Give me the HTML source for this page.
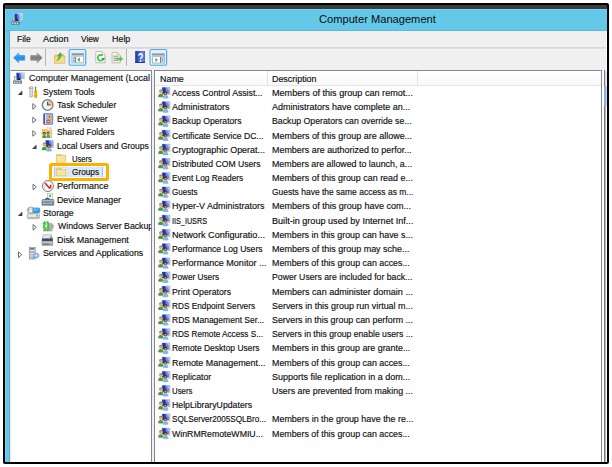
<!DOCTYPE html>
<html>
<head>
<meta charset="utf-8">
<title>Computer Management</title>
<style>
html,body{margin:0;padding:0;background:#fff;}
body{width:612px;height:467px;overflow:hidden;position:relative;font-family:"Liberation Sans",sans-serif;font-size:9px;color:#151515;}
.abs{position:absolute;}
.t{position:absolute;display:inline-block;white-space:nowrap;height:14px;line-height:14px;font-size:9px;transform-origin:0 50%;-webkit-text-stroke:0.15px #111;color:#0c0c0c;}
.tt{height:16px;line-height:16px;color:#111;-webkit-text-stroke:0.05px #111;}
svg{position:absolute;overflow:visible;}
#frame{position:absolute;left:3px;top:3px;width:606px;height:461px;background:#000;border-radius:2px;}
#dark{position:absolute;left:5px;top:5px;width:602px;height:4px;background:#3d3d3d;}
#win{position:absolute;left:5px;top:9px;width:602px;height:453px;background:#64c9e9;}
#menubar{position:absolute;left:10px;top:31px;width:597px;height:16px;background:#f0f0f0;}
#toolbar{position:absolute;left:10px;top:47px;width:597px;height:23px;background:#f0f0f0;border-top:1px solid #d8d8d8;box-sizing:border-box;}
#tbl{position:absolute;left:10px;top:48px;width:597px;height:1px;background:#dedede;}
#client{position:absolute;left:10px;top:70px;width:597px;height:392px;background:#f0f0f0;}
#tree{position:absolute;left:10px;top:70px;width:142px;height:392px;background:#fff;border:1px solid #828790;border-left-color:#efe9e9;border-bottom:none;box-sizing:border-box;}
#treeclip{position:absolute;left:0;top:0;width:151px;height:462px;overflow:hidden;}
#list{position:absolute;left:154px;top:70px;width:448px;height:392px;background:#fff;border:1px solid #828790;border-bottom:none;box-sizing:border-box;}
#hdr{position:absolute;left:155px;top:71px;width:446px;height:15px;background:linear-gradient(#fff,#f8f8f8);border-bottom:1px solid #e6e6e6;box-sizing:border-box;}
.hsep{position:absolute;top:71px;width:1px;height:15px;background:#e2e2e2;}
#act1{position:absolute;left:604px;top:70px;width:1px;height:392px;background:#7d7d7d;}
#act2{position:absolute;left:605px;top:71px;width:1px;height:391px;background:#b4b4b4;}
#act3{position:absolute;left:604px;top:86px;width:2px;height:20px;background:#8fadda;border-right:1px solid #cbd9ee;}
#act4{position:absolute;left:605px;top:71px;width:1px;height:15px;background:#d6d6d6;border-right:1px solid #ebebeb;}
#selbox{position:absolute;left:49px;top:163px;width:59.6px;height:17.7px;border:3.7px solid #f9b200;border-radius:2.5px;box-sizing:border-box;background:#f6f9fd;}
#sel{position:absolute;left:53.5px;top:166.7px;width:49.6px;height:10.6px;background:#dde8f5;border-left:1px solid #b6c9e2;border-right:1px solid #a6bcd9;box-sizing:border-box;}
</style>
</head>
<body>
<div id="frame"></div>
<div id="dark"></div>
<div id="win"></div><div class="abs" style="left:9px;top:31px;width:1px;height:431px;background:#6fa6c0"></div><div class="abs" style="left:5px;top:10px;width:1px;height:452px;background:#6fd5f8"></div><div class="abs" style="left:5px;top:9px;width:602px;height:1px;background:#72d6f8"></div>
<svg style="left:11px;top:13px" width="13" height="13" viewBox="0 0 13 13"><g transform="translate(0.10,0.00) scale(1.0000,1.0000)"><rect x="2.7" y="0" width="9.1" height="7.3" rx="0.4" fill="#cdcec8"/><rect x="3.5" y="0.7" width="7.4" height="5.6" fill="#a6c2f2"/><path d="M3.5 0.7 H5.6 L6.8 6.3 H3.5z" fill="#1a2fc4"/><path d="M5.6 0.7 H7.2 L8.6 6.3 H6.8z" fill="#4f72e2"/><path d="M9 0.7 H10.9 V3 z" fill="#d3e2fa"/><path d="M3.2 8 L4.4 6 H7 L7.8 8Z" fill="#2b2f38"/><rect x="0" y="8.6" width="8.9" height="3.2" fill="#67798b"/><rect x="0" y="8.6" width="8.9" height="0.7" fill="#8b9aa8"/><rect x="0.9" y="9.7" width="1.5" height="1.4" fill="#d3dbe3"/><rect x="3.3" y="9.7" width="1.5" height="1.4" fill="#d3dbe3"/><rect x="5.7" y="9.7" width="1.5" height="1.4" fill="#d3dbe3"/><rect x="0.7" y="3.9" width="1.7" height="2.4" fill="#8fcf86"/><rect x="0.7" y="3.9" width="1.7" height="0.9" fill="#a8aeb4"/><rect x="1.1" y="6.3" width="0.9" height="2.3" fill="#8a9199"/></g></svg>
<div id="menubar"></div>
<div id="toolbar"></div><div id="tbl"></div>
<svg style="left:13px;top:52px" width="14" height="14" viewBox="0 0 14 14"><g transform="translate(0.00,0.20)"><defs><linearGradient id="gb" x1="0" y1="0" x2="0" y2="1"><stop offset="0" stop-color="#6cc3f7"/><stop offset="0.5" stop-color="#1f8fe6"/><stop offset="1" stop-color="#3aa2ee"/></linearGradient></defs><path d="M0.6 5.6 L5.7 0.8 V3.3 H11.7 V8 H5.7 V10.5Z" fill="url(#gb)" stroke="#2e97ea" stroke-width="0.7" stroke-linejoin="round"/></g></svg>
<svg style="left:30px;top:52px" width="14" height="14" viewBox="0 0 14 14"><g transform="translate(0.00,0.20)"><defs><linearGradient id="gg" x1="0" y1="0" x2="0" y2="1"><stop offset="0" stop-color="#a5a5a5"/><stop offset="0.5" stop-color="#7d7d7d"/><stop offset="1" stop-color="#9a9a9a"/></linearGradient></defs><path d="M12.3 5.6 L7.2 0.8 V3.3 H0.7 V8 H7.2 V10.5Z" fill="url(#gg)" stroke="#8c8c8c" stroke-width="0.7" stroke-linejoin="round"/></g></svg>
<div class="abs" style="left:45px;top:49px;width:1px;height:17px;background:#b4b4b4"></div>
<div class="abs" style="left:126px;top:49px;width:1px;height:17px;background:#b4b4b4"></div>
<svg style="left:54px;top:52px" width="13" height="13" viewBox="0 0 13 13"><g transform="translate(0.00,0.00)"><path d="M0.3 2.6 h4.2 l0.8 1 h5.6 v7.6 h-10.6z" fill="#e6c96e"/><rect x="0.3" y="4.2" width="10.6" height="7" fill="#f3dc8c" stroke="#d2b04e" stroke-width="0.5"/><path d="M2.6 8.6 Q4.6 7.4 5.2 3.6 L3.6 3.8 L6.4 0.4 L8.2 3.4 L6.8 3.5 Q6.4 8 2.6 8.6Z" fill="#3db83a" stroke="#2a8f2a" stroke-width="0.3"/><rect x="8.4" y="2.4" width="1.4" height="0.9" fill="#4aa0e0"/></g></svg>
<svg style="left:68px;top:48px" width="20" height="19" viewBox="0 0 20 19"><g transform="translate(0.60,0.90)"><defs><linearGradient id="hg68" x1="0" y1="0" x2="0" y2="1"><stop offset="0" stop-color="#e4f1fd"/><stop offset="1" stop-color="#cfe5f9"/></linearGradient></defs><rect x="0.6" y="0.6" width="16.5" height="15.7" rx="1.2" fill="url(#hg68)" stroke="#4fabea" stroke-width="1.2"/><rect x="1.7" y="1.7" width="14.3" height="13.5" fill="none" stroke="#e6f2fd" stroke-width="0.8"/></g></svg>
<svg style="left:71px;top:53px" width="14" height="12" viewBox="0 0 14 12"><g transform="translate(0.70,0.30)"><rect x="0.3" y="0.3" width="11.6" height="9.2" fill="#fff" stroke="#9da2a8" stroke-width="0.7"/><rect x="0.3" y="0.3" width="11.6" height="1.7" fill="#8b95a5"/><rect x="0.6" y="2" width="11" height="1.4" fill="#b9bdc2"/><rect x="0.8" y="3.6" width="3" height="5.6" fill="#b7d4f1"/><rect x="3.6" y="3.4" width="0.8" height="5.8" fill="#5f6672"/><rect x="1.6" y="4.6" width="1.2" height="1" fill="#5a8fd6"/><rect x="1.6" y="7" width="1.2" height="1" fill="#5a8fd6"/><path d="M8.2 4.3 V8.5 L5.6 6.4Z" fill="#2fae3a"/></g></svg>
<svg style="left:95px;top:51px" width="12" height="14" viewBox="0 0 12 14"><g transform="translate(0.30,0.00)"><path d="M1 0.9 H7 L10.2 4.1 V12.2 H1Z" fill="#d9d9d9"/><path d="M0.5 0.5 H6.6 L9.7 3.6 V11.7 H0.5Z" fill="#fefefe" stroke="#a8a8a8" stroke-width="0.7"/><path d="M6.6 0.5 V3.6 H9.7" fill="#ececec" stroke="#a8a8a8" stroke-width="0.5"/><path d="M7.3 4.6 A2.9 2.9 0 1 0 8.2 7.4" fill="none" stroke="#3fc640" stroke-width="1.7"/><path d="M6.2 6.9 H9.8 L8.1 9.5Z" fill="#27a02c"/></g></svg>
<svg style="left:111px;top:51px" width="14" height="14" viewBox="0 0 14 14"><g transform="translate(0.50,0.80)"><path d="M0.9 0.9 H6.4 L9.2 3.7 V11.5 H0.9Z" fill="#dcdcd4"/><path d="M0.5 0.5 H6 L8.7 3.2 V11 H0.5Z" fill="#f9f5de" stroke="#b3ae98" stroke-width="0.7"/><path d="M6 0.5 V3.2 H8.7" fill="#ebe6c8" stroke="#b3ae98" stroke-width="0.5"/><path d="M1.8 4.4 H6.8 M1.8 6.5 H6.2 M1.8 8.6 H6.8" stroke="#66668e" stroke-width="0.7"/><path d="M5.4 6.2 H8.6 V4.9 L11.7 7.1 L8.6 9.3 V8 H5.4Z" fill="#4ad048" stroke="#35b238" stroke-width="0.3"/></g></svg>
<svg style="left:135px;top:51px" width="11" height="13" viewBox="0 0 11 13"><g transform="translate(0.20,0.00)"><defs><linearGradient id="hb" x1="0" y1="0" x2="1" y2="0"><stop offset="0" stop-color="#24309a"/><stop offset="0.3" stop-color="#3453c8"/><stop offset="0.75" stop-color="#5f86e8"/><stop offset="1" stop-color="#4467d4"/></linearGradient></defs><rect x="0" y="0" width="9.8" height="12" fill="url(#hb)"/><rect x="0" y="11" width="9.8" height="1" fill="#26338f"/><text transform="translate(5.4,10.7) scale(0.74,1)" x="0" y="0" text-anchor="middle" font-family="Liberation Sans, sans-serif" font-weight="bold" font-size="12.2" fill="#ffffff">?</text></g></svg>
<svg style="left:149px;top:48px" width="20" height="19" viewBox="0 0 20 19"><g transform="translate(0.50,0.90)"><defs><linearGradient id="hg149" x1="0" y1="0" x2="0" y2="1"><stop offset="0" stop-color="#e4f1fd"/><stop offset="1" stop-color="#cfe5f9"/></linearGradient></defs><rect x="0.6" y="0.6" width="16.5" height="15.7" rx="1.2" fill="url(#hg149)" stroke="#4fabea" stroke-width="1.2"/><rect x="1.7" y="1.7" width="14.3" height="13.5" fill="none" stroke="#e6f2fd" stroke-width="0.8"/></g></svg>
<svg style="left:152px;top:53px" width="14" height="12" viewBox="0 0 14 12"><g transform="translate(0.30,0.50)"><rect x="0.3" y="0.3" width="11.8" height="9.2" fill="#fff" stroke="#9da2a8" stroke-width="0.7"/><rect x="0.3" y="0.3" width="11.8" height="1.7" fill="#8b95a5"/><rect x="0.6" y="2" width="11.2" height="1.4" fill="#b9bdc2"/><rect x="8.4" y="3.6" width="3.4" height="5.6" fill="#b7d4f1"/><rect x="7.9" y="3.4" width="0.8" height="5.8" fill="#5f6672"/><rect x="9.7" y="4.6" width="0.9" height="0.9" fill="#4a7fc0"/><rect x="9.7" y="6.6" width="0.9" height="0.9" fill="#4a7fc0"/><path d="M3.2 4.3 V8.5 L5.6 6.4Z" fill="#2fae3a"/></g></svg>
<div id="client"></div>
<div id="tree"></div>
<div id="selbox"></div><div id="sel"></div>
<div id="treeclip">
<svg style="left:13px;top:72px" width="13" height="13" viewBox="0 0 13 13"><g transform="translate(0.10,0.30) scale(1.0000,0.9661)"><rect x="2.7" y="0" width="9.1" height="7.3" rx="0.4" fill="#cdcec8"/><rect x="3.5" y="0.7" width="7.4" height="5.6" fill="#a6c2f2"/><path d="M3.5 0.7 H5.6 L6.8 6.3 H3.5z" fill="#1a2fc4"/><path d="M5.6 0.7 H7.2 L8.6 6.3 H6.8z" fill="#4f72e2"/><path d="M9 0.7 H10.9 V3 z" fill="#d3e2fa"/><path d="M3.2 8 L4.4 6 H7 L7.8 8Z" fill="#2b2f38"/><rect x="0" y="8.6" width="8.9" height="3.2" fill="#67798b"/><rect x="0" y="8.6" width="8.9" height="0.7" fill="#8b9aa8"/><rect x="0.9" y="9.7" width="1.5" height="1.4" fill="#d3dbe3"/><rect x="3.3" y="9.7" width="1.5" height="1.4" fill="#d3dbe3"/><rect x="5.7" y="9.7" width="1.5" height="1.4" fill="#d3dbe3"/><rect x="0.7" y="3.9" width="1.7" height="2.4" fill="#8fcf86"/><rect x="0.7" y="3.9" width="1.7" height="0.9" fill="#a8aeb4"/><rect x="1.1" y="6.3" width="0.9" height="2.3" fill="#8a9199"/></g></svg>
<span class="t" style="left:29.30px;top:71.1px;transform:scaleX(0.9946)">Computer Management (Local</span>
<svg style="left:29px;top:86px" width="10" height="14" viewBox="0 0 10 14"><g transform="translate(0.20,0.00) scale(0.9651,1.0000)"><path d="M1.1 0.5 V2.6 H2.9 V0.5 Q4.4 1.2 3.9 3.2 L3.2 4.2 V10.6 Q2 11.8 0.8 10.6 V4.2 L0.1 3.2 Q-0.4 1.2 1.1 0.5Z" fill="#ececec" stroke="#77797c" stroke-width="0.6"/><rect x="6.2" y="0.4" width="1" height="5" fill="#5a5d61"/><path d="M5.2 5 Q6.7 4 8.2 5 Q8.6 6.6 7.6 7.6 Q8.8 9.6 8 11.4 Q6.7 12.2 5.4 11.4 Q4.6 9.6 5.8 7.6 Q4.8 6.6 5.2 5Z" fill="#f3ab05" stroke="#c98a00" stroke-width="0.3"/></g></svg>
<svg style="left:17px;top:90px" width="6" height="6" viewBox="0 0 6 6"><path transform="translate(0.80,0.60)" d="M4.5 0 V4.5 H0Z" fill="#3c3c3c"/></svg>
<span class="t" style="left:43.00px;top:85.0px;transform:scaleX(0.9682)">System Tools</span>
<svg style="left:41px;top:99px" width="14" height="13" viewBox="0 0 14 13"><g transform="translate(0.70,0.20) scale(1.0000,1.0000)"><circle cx="5.9" cy="5.85" r="5.3" fill="#dfe6ee" stroke="#7b8189" stroke-width="1.4"/><circle cx="5.9" cy="5.85" r="4.2" fill="#f4f7fa"/><path d="M5.9 5.85 V1.6 A4.25 4.25 0 0 1 10.15 5.85Z" fill="#f2c266"/><path d="M5.9 2.6V5.85H9" fill="none" stroke="#464a51" stroke-width="1.1"/></g></svg>
<svg style="left:31px;top:102px" width="7" height="9" viewBox="0 0 7 9"><path transform="translate(0.90,0.80)" d="M0.9 0.8 L4.2 3.6 L0.9 6.4Z" fill="#fff" stroke="#5f5f5f" stroke-width="0.9"/></svg>
<span class="t" style="left:57.30px;top:98.2px;transform:scaleX(0.9637)">Task Scheduler</span>
<svg style="left:43px;top:113px" width="12" height="13" viewBox="0 0 12 13"><g transform="translate(0.30,0.30) scale(1.0000,1.0000)"><rect x="0.4" y="0.4" width="9" height="10.6" rx="0.6" fill="#a9b9e2" stroke="#5168b4" stroke-width="0.8"/><rect x="0.4" y="0.4" width="1.2" height="10.6" fill="#3f4f8e"/><rect x="1.8" y="0.8" width="0.9" height="9.8" fill="#dfe6f6"/><path d="M6.2 1.4 L8.6 5.8 H3.8Z" fill="#f4d233" stroke="#b99a1c" stroke-width="0.3"/><rect x="5.9" y="2.8" width="0.7" height="1.8" fill="#3a3210"/><circle cx="5" cy="8" r="1.9" fill="#dc3a3a"/><rect x="3.9" y="7.6" width="2.2" height="0.9" fill="#fff"/></g></svg>
<svg style="left:31px;top:116px" width="7" height="9" viewBox="0 0 7 9"><path transform="translate(0.90,0.40)" d="M0.9 0.8 L4.2 3.6 L0.9 6.4Z" fill="#fff" stroke="#5f5f5f" stroke-width="0.9"/></svg>
<span class="t" style="left:56.90px;top:111.8px;transform:scaleX(0.9572)">Event Viewer</span>
<svg style="left:41px;top:127px" width="12" height="13" viewBox="0 0 12 13"><g transform="translate(0.70,0.50) scale(1.0000,1.0000)"><path d="M0.3 1.6 H4.6 L5.4 2.6 H9.9 V10.3 H0.3Z" fill="#e6c86c"/><rect x="5.6" y="0.2" width="3.8" height="2.6" fill="#f6f2dc" stroke="#c9b470" stroke-width="0.3"/><rect x="7.6" y="0.8" width="1.2" height="0.8" fill="#5b9fdc"/><rect x="0.3" y="2.8" width="9.6" height="7.5" fill="#f5dc88" stroke="#d3b04e" stroke-width="0.5"/><path d="M0.8 10.4 Q0.8 7.6 2.6 7.6 Q4.4 7.6 4.4 10.4Z" fill="#3f9440"/><circle cx="2.6" cy="5.8" r="1.5" fill="#4a3520"/><circle cx="2.6" cy="6.3" r="0.9" fill="#c9996a"/><path d="M4.8 10.2 Q4.8 7.2 6.6 7.2 Q8.4 7.2 8.4 10.2Z" fill="#3f94b8"/><circle cx="6.4" cy="5.4" r="1.5" fill="#4a3520"/><circle cx="6.4" cy="5.9" r="0.9" fill="#c9996a"/></g></svg>
<svg style="left:31px;top:129px" width="7" height="9" viewBox="0 0 7 9"><path transform="translate(0.90,0.80)" d="M0.9 0.8 L4.2 3.6 L0.9 6.4Z" fill="#fff" stroke="#5f5f5f" stroke-width="0.9"/></svg>
<span class="t" style="left:56.90px;top:124.7px;transform:scaleX(0.9350)">Shared Folders</span>
<svg style="left:41px;top:140px" width="14" height="13" viewBox="0 0 14 13"><g transform="translate(0.70,0.10) scale(0.9919,1.0000)"><rect x="3.6" y="0" width="8.7" height="7.9" rx="0.5" fill="#c6c7c1"/><rect x="4.2" y="0.5" width="6.8" height="5.9" fill="#6a8aec"/><path d="M4.2 0.5 H7.2 L8 6.4 H4.2z" fill="#1b31c8"/><path d="M8.6 0.5 H11 V4 z" fill="#a9c1f6"/><path d="M0 9.6 Q0.2 6.6 2.6 6.6 Q5 6.6 5.2 9.6 Q2.6 10.6 0 9.6Z" fill="#4a9a3c"/><circle cx="2.8" cy="4.4" r="1.9" fill="#cdb96e"/><path d="M0.9 4.2 A1.9 1.9 0 0 1 4.7 4.2 L3.8 3.6 L1.8 3.6Z" fill="#9c8440"/><path d="M4.4 10.9 Q4.6 7.8 7.4 7.8 Q10.2 7.8 10.4 10.9 Q7.4 11.9 4.4 10.9Z" fill="#86b6e6"/><circle cx="7.3" cy="5.8" r="2" fill="#5c3416"/><circle cx="7.4" cy="6.5" r="1.1" fill="#c8915f"/></g></svg>
<svg style="left:32px;top:144px" width="6" height="6" viewBox="0 0 6 6"><path transform="translate(0.00,0.40)" d="M4.5 0 V4.5 H0Z" fill="#3c3c3c"/></svg>
<span class="t" style="left:57.10px;top:138.8px;transform:scaleX(0.9462)">Local Users and Groups</span>
<svg style="left:55px;top:153px" width="13" height="11" viewBox="0 0 13 11"><g transform="translate(0.90,0.90) scale(1.0000,1.0000)"><path d="M0.3 0.6 Q0.3 0.2 0.8 0.2 H5.4 L6.2 1.4 H9.9 V8.3 H0.3Z" fill="#e6cc78"/><rect x="6.6" y="0.2" width="2.8" height="1.6" fill="#fbfaf2" stroke="#d9d3b5" stroke-width="0.3"/><rect x="0.3" y="1.8" width="9.6" height="6.5" fill="#f7e6a0" stroke="#d6bc66" stroke-width="0.55"/></g></svg>
<span class="t" style="left:72.20px;top:151.6px;transform:scaleX(0.8416)">Users</span>
<svg style="left:55px;top:167px" width="13" height="11" viewBox="0 0 13 11"><g transform="translate(0.90,0.60) scale(1.0000,1.0000)"><path d="M0.3 0.6 Q0.3 0.2 0.8 0.2 H5.4 L6.2 1.4 H9.9 V8.3 H0.3Z" fill="#e6cc78"/><rect x="6.6" y="0.2" width="2.8" height="1.6" fill="#fbfaf2" stroke="#d9d3b5" stroke-width="0.3"/><rect x="0.3" y="1.8" width="9.6" height="6.5" fill="#f7e6a0" stroke="#d6bc66" stroke-width="0.55"/></g></svg>
<span class="t" style="left:72.20px;top:165.1px;transform:scaleX(0.9162)">Groups</span>
<svg style="left:41px;top:180px" width="14" height="14" viewBox="0 0 14 14"><g transform="translate(0.80,0.00) scale(1.0000,1.0000)"><circle cx="6.1" cy="6.05" r="5.5" fill="#fbfbfb" stroke="#7f8388" stroke-width="1"/><circle cx="6.1" cy="6.05" r="4.4" fill="none" stroke="#d9dcdf" stroke-width="0.6"/><path d="M3.2 3 L7.6 8 L8.8 7.8 V4.8" fill="none" stroke="#d81e1e" stroke-width="1.5" stroke-linejoin="round"/><path d="M2.8 8.4 L3.6 4.4" fill="none" stroke="#7fae86" stroke-width="0.5"/></g></svg>
<svg style="left:32px;top:183px" width="7" height="9" viewBox="0 0 7 9"><path transform="translate(0.20,0.40)" d="M0.9 0.8 L4.2 3.6 L0.9 6.4Z" fill="#fff" stroke="#5f5f5f" stroke-width="0.9"/></svg>
<span class="t" style="left:56.80px;top:178.8px;transform:scaleX(0.9977)">Performance</span>
<svg style="left:41px;top:193px" width="14" height="14" viewBox="0 0 14 14"><g transform="translate(0.80,0.30) scale(1.0000,1.0000)"><rect x="5.6" y="0.2" width="5.4" height="7" fill="#f3f5f6" stroke="#9aa0a6" stroke-width="0.5"/><rect x="7.2" y="1.6" width="2" height="2" fill="#4cb848"/><path d="M3 6.6 Q5.6 3.8 8.4 6.6" fill="none" stroke="#3d4a55" stroke-width="1.3"/><rect x="0.2" y="6.2" width="11.8" height="5.8" rx="0.6" fill="#71879a" stroke="#4d6070" stroke-width="0.5"/><rect x="0.6" y="6.6" width="11" height="1.4" fill="#a9bac8"/><rect x="1.6" y="9.2" width="1.2" height="1.6" fill="#d8e0e8"/><rect x="8.6" y="9.2" width="1.2" height="1.6" fill="#d8e0e8"/><rect x="3.4" y="9.8" width="4.6" height="0.7" fill="#c2ced8"/></g></svg>
<span class="t" style="left:56.80px;top:192.7px;transform:scaleX(0.9766)">Device Manager</span>
<svg style="left:26px;top:206px" width="15" height="14" viewBox="0 0 15 14"><g transform="translate(0.90,0.70) scale(1.0000,1.0000)"><ellipse cx="4" cy="3.6" rx="3.6" ry="3.4" fill="#c9cdd1" stroke="#8e9499" stroke-width="0.6"/><ellipse cx="3.8" cy="3.6" rx="1.6" ry="2" fill="#eef0f2"/><rect x="1.2" y="2.4" width="1.2" height="1.2" fill="#4cb848"/><rect x="6" y="1.2" width="6.8" height="5" rx="0.8" fill="#3ea2e0" stroke="#2c78b8" stroke-width="0.5"/><path d="M6.6 1.8 H12.2 L6.6 4.8Z" fill="#6cbcec"/><rect x="0.4" y="7" width="12.2" height="5" rx="1.2" fill="#e6e8ea" stroke="#8e9499" stroke-width="0.7"/><rect x="0.8" y="10.2" width="11.4" height="1.4" rx="0.6" fill="#b4b9be"/><rect x="9.4" y="8.2" width="1.6" height="1.6" fill="#4cb848"/></g></svg>
<svg style="left:17px;top:211px" width="6" height="6" viewBox="0 0 6 6"><path transform="translate(0.80,0.40)" d="M4.5 0 V4.5 H0Z" fill="#3c3c3c"/></svg>
<span class="t" style="left:43.00px;top:205.8px;transform:scaleX(0.9741)">Storage</span>
<svg style="left:41px;top:220px" width="14" height="13" viewBox="0 0 14 13"><g transform="translate(0.80,0.50) scale(1.0000,1.0000)"><ellipse cx="8.8" cy="6" rx="2.8" ry="3.2" fill="#b9bdc2" stroke="#7f858b" stroke-width="0.5"/><circle cx="9.8" cy="5.8" r="0.8" fill="#d07a3a"/><path d="M1.2 9.4 H10.6 V10.8 H1.2Z" fill="#9ba0a6"/><path d="M2.6 9.8 Q0.4 6.6 2 3.8 L0.6 3.6 L3 0.4 L4.6 4 L3.4 3.8 Q2.6 6.4 4.6 9.6Z" fill="#3fd23a" stroke="#2aa02a" stroke-width="0.3"/><path d="M6.2 0.8 Q8.4 4 6.8 7 L8.2 7.2 L6 10.6 L4.2 7 L5.4 7.2 Q6.4 4.4 4.6 1.2Z" fill="#3fd23a" stroke="#2aa02a" stroke-width="0.3"/></g></svg>
<svg style="left:32px;top:223px" width="7" height="9" viewBox="0 0 7 9"><path transform="translate(0.20,0.70)" d="M0.9 0.8 L4.2 3.6 L0.9 6.4Z" fill="#fff" stroke="#5f5f5f" stroke-width="0.9"/></svg>
<span class="t" style="left:57.70px;top:219.1px;transform:scaleX(0.9711)">Windows Server Backup</span>
<svg style="left:41px;top:234px" width="14" height="13" viewBox="0 0 14 13"><g transform="translate(0.50,0.30) scale(1.0000,1.0000)"><path d="M0.6 4.4 L2 0.4 H9.8 L11.2 4.4Z" fill="#e4e7e9" stroke="#8c9197" stroke-width="0.5"/><rect x="8.6" y="2.2" width="1.8" height="1.8" fill="#4cb848"/><rect x="0.4" y="4.2" width="11" height="2.6" fill="#3f454c"/><rect x="2.2" y="5" width="1" height="0.9" fill="#3a5fd0"/><rect x="6.6" y="5" width="1" height="0.9" fill="#3a5fd0"/><rect x="0.4" y="6.8" width="11" height="4.4" fill="#a4a9ae" stroke="#7d8288" stroke-width="0.4"/><rect x="1.2" y="7.4" width="9.4" height="1.2" fill="#c9cdd1"/><rect x="1.6" y="9.4" width="6" height="0.9" fill="#5f646a"/></g></svg>
<span class="t" style="left:56.80px;top:232.6px;transform:scaleX(0.9900)">Disk Management</span>
<svg style="left:28px;top:247px" width="13" height="14" viewBox="0 0 13 14"><g transform="translate(0.90,0.30) scale(1.0000,1.0000)"><rect x="0.3" y="0.3" width="6" height="11.4" fill="#bcc8d4" stroke="#7d8894" stroke-width="0.6"/><rect x="1.2" y="1" width="4.2" height="1.1" fill="#4d5660"/><rect x="1.2" y="2.8" width="4.2" height="0.9" fill="#e8edf2"/><rect x="1.2" y="4.4" width="4.2" height="0.9" fill="#8d98a4"/><rect x="1.2" y="6" width="4.2" height="0.8" fill="#dfe5ea"/><rect x="3.6" y="10.2" width="1.4" height="1.1" fill="#4cb848"/><circle cx="7.4" cy="8.2" r="2.5" fill="#8fb6e6" stroke="#6f9ad4" stroke-width="1.1" stroke-dasharray="1.1 0.9"/><circle cx="7.4" cy="8.2" r="1" fill="#f2f6fb"/></g></svg>
<svg style="left:17px;top:251px" width="7" height="9" viewBox="0 0 7 9"><path transform="translate(0.60,0.10)" d="M0.9 0.8 L4.2 3.6 L0.9 6.4Z" fill="#fff" stroke="#5f5f5f" stroke-width="0.9"/></svg>
<span class="t" style="left:43.00px;top:246.1px;transform:scaleX(0.9772)">Services and Applications</span>
</div>
<div id="list"></div>
<div id="hdr"></div><div class="hsep" style="left:267px"></div><div class="hsep" style="left:417px"></div>
<div class="abs" style="left:602px;top:70px;width:2px;height:392px;background:#fcfcfc"></div><div class="abs" style="left:606px;top:31px;width:1px;height:431px;background:#fdfdfd"></div><div class="abs" style="left:5px;top:30px;width:602px;height:1px;background:#5cb9da"></div><div id="act1"></div><div id="act2"></div><div id="act3"></div><div id="act4"></div>
<svg style="left:158px;top:87px" width="14" height="13" viewBox="0 0 14 13"><g transform="translate(0.10,0.10) scale(1.0000,1.0000)"><rect x="3.6" y="0" width="8.7" height="7.9" rx="0.5" fill="#c6c7c1"/><rect x="4.2" y="0.5" width="6.8" height="5.9" fill="#6a8aec"/><path d="M4.2 0.5 H7.2 L8 6.4 H4.2z" fill="#1b31c8"/><path d="M8.6 0.5 H11 V4 z" fill="#a9c1f6"/><path d="M0 9.6 Q0.2 6.6 2.6 6.6 Q5 6.6 5.2 9.6 Q2.6 10.6 0 9.6Z" fill="#4a9a3c"/><circle cx="2.8" cy="4.4" r="1.9" fill="#cdb96e"/><path d="M0.9 4.2 A1.9 1.9 0 0 1 4.7 4.2 L3.8 3.6 L1.8 3.6Z" fill="#9c8440"/><path d="M4.4 10.9 Q4.6 7.8 7.4 7.8 Q10.2 7.8 10.4 10.9 Q7.4 11.9 4.4 10.9Z" fill="#86b6e6"/><circle cx="7.3" cy="5.8" r="2" fill="#5c3416"/><circle cx="7.4" cy="6.5" r="1.1" fill="#c8915f"/></g></svg>
<span class="t" style="left:172.00px;top:85.9px;transform:scaleX(0.9625)">Access Control Assist...</span>
<span class="t" style="left:272.40px;top:85.9px;transform:scaleX(1.0097)">Members of this group can remot...</span>
<svg style="left:158px;top:101px" width="14" height="13" viewBox="0 0 14 13"><g transform="translate(0.10,0.29) scale(1.0000,1.0000)"><rect x="3.6" y="0" width="8.7" height="7.9" rx="0.5" fill="#c6c7c1"/><rect x="4.2" y="0.5" width="6.8" height="5.9" fill="#6a8aec"/><path d="M4.2 0.5 H7.2 L8 6.4 H4.2z" fill="#1b31c8"/><path d="M8.6 0.5 H11 V4 z" fill="#a9c1f6"/><path d="M0 9.6 Q0.2 6.6 2.6 6.6 Q5 6.6 5.2 9.6 Q2.6 10.6 0 9.6Z" fill="#4a9a3c"/><circle cx="2.8" cy="4.4" r="1.9" fill="#cdb96e"/><path d="M0.9 4.2 A1.9 1.9 0 0 1 4.7 4.2 L3.8 3.6 L1.8 3.6Z" fill="#9c8440"/><path d="M4.4 10.9 Q4.6 7.8 7.4 7.8 Q10.2 7.8 10.4 10.9 Q7.4 11.9 4.4 10.9Z" fill="#86b6e6"/><circle cx="7.3" cy="5.8" r="2" fill="#5c3416"/><circle cx="7.4" cy="6.5" r="1.1" fill="#c8915f"/></g></svg>
<span class="t" style="left:172.00px;top:100.1px;transform:scaleX(0.9997)">Administrators</span>
<span class="t" style="left:272.40px;top:100.1px;transform:scaleX(0.9981)">Administrators have complete an...</span>
<svg style="left:158px;top:115px" width="14" height="13" viewBox="0 0 14 13"><g transform="translate(0.10,0.48) scale(1.0000,1.0000)"><rect x="3.6" y="0" width="8.7" height="7.9" rx="0.5" fill="#c6c7c1"/><rect x="4.2" y="0.5" width="6.8" height="5.9" fill="#6a8aec"/><path d="M4.2 0.5 H7.2 L8 6.4 H4.2z" fill="#1b31c8"/><path d="M8.6 0.5 H11 V4 z" fill="#a9c1f6"/><path d="M0 9.6 Q0.2 6.6 2.6 6.6 Q5 6.6 5.2 9.6 Q2.6 10.6 0 9.6Z" fill="#4a9a3c"/><circle cx="2.8" cy="4.4" r="1.9" fill="#cdb96e"/><path d="M0.9 4.2 A1.9 1.9 0 0 1 4.7 4.2 L3.8 3.6 L1.8 3.6Z" fill="#9c8440"/><path d="M4.4 10.9 Q4.6 7.8 7.4 7.8 Q10.2 7.8 10.4 10.9 Q7.4 11.9 4.4 10.9Z" fill="#86b6e6"/><circle cx="7.3" cy="5.8" r="2" fill="#5c3416"/><circle cx="7.4" cy="6.5" r="1.1" fill="#c8915f"/></g></svg>
<span class="t" style="left:172.00px;top:114.3px;transform:scaleX(0.9584)">Backup Operators</span>
<span class="t" style="left:272.40px;top:114.3px;transform:scaleX(0.9689)">Backup Operators can override se...</span>
<svg style="left:158px;top:129px" width="14" height="14" viewBox="0 0 14 14"><g transform="translate(0.10,0.67) scale(1.0000,1.0000)"><rect x="3.6" y="0" width="8.7" height="7.9" rx="0.5" fill="#c6c7c1"/><rect x="4.2" y="0.5" width="6.8" height="5.9" fill="#6a8aec"/><path d="M4.2 0.5 H7.2 L8 6.4 H4.2z" fill="#1b31c8"/><path d="M8.6 0.5 H11 V4 z" fill="#a9c1f6"/><path d="M0 9.6 Q0.2 6.6 2.6 6.6 Q5 6.6 5.2 9.6 Q2.6 10.6 0 9.6Z" fill="#4a9a3c"/><circle cx="2.8" cy="4.4" r="1.9" fill="#cdb96e"/><path d="M0.9 4.2 A1.9 1.9 0 0 1 4.7 4.2 L3.8 3.6 L1.8 3.6Z" fill="#9c8440"/><path d="M4.4 10.9 Q4.6 7.8 7.4 7.8 Q10.2 7.8 10.4 10.9 Q7.4 11.9 4.4 10.9Z" fill="#86b6e6"/><circle cx="7.3" cy="5.8" r="2" fill="#5c3416"/><circle cx="7.4" cy="6.5" r="1.1" fill="#c8915f"/></g></svg>
<span class="t" style="left:172.00px;top:128.5px;transform:scaleX(0.9526)">Certificate Service DC...</span>
<span class="t" style="left:272.40px;top:128.5px;transform:scaleX(0.9967)">Members of this group are allowe...</span>
<svg style="left:158px;top:143px" width="14" height="14" viewBox="0 0 14 14"><g transform="translate(0.10,0.86) scale(1.0000,1.0000)"><rect x="3.6" y="0" width="8.7" height="7.9" rx="0.5" fill="#c6c7c1"/><rect x="4.2" y="0.5" width="6.8" height="5.9" fill="#6a8aec"/><path d="M4.2 0.5 H7.2 L8 6.4 H4.2z" fill="#1b31c8"/><path d="M8.6 0.5 H11 V4 z" fill="#a9c1f6"/><path d="M0 9.6 Q0.2 6.6 2.6 6.6 Q5 6.6 5.2 9.6 Q2.6 10.6 0 9.6Z" fill="#4a9a3c"/><circle cx="2.8" cy="4.4" r="1.9" fill="#cdb96e"/><path d="M0.9 4.2 A1.9 1.9 0 0 1 4.7 4.2 L3.8 3.6 L1.8 3.6Z" fill="#9c8440"/><path d="M4.4 10.9 Q4.6 7.8 7.4 7.8 Q10.2 7.8 10.4 10.9 Q7.4 11.9 4.4 10.9Z" fill="#86b6e6"/><circle cx="7.3" cy="5.8" r="2" fill="#5c3416"/><circle cx="7.4" cy="6.5" r="1.1" fill="#c8915f"/></g></svg>
<span class="t" style="left:172.00px;top:142.7px;transform:scaleX(0.9942)">Cryptographic Operat...</span>
<span class="t" style="left:272.40px;top:142.7px;transform:scaleX(0.9931)">Members are authorized to perfor...</span>
<svg style="left:158px;top:158px" width="14" height="13" viewBox="0 0 14 13"><g transform="translate(0.10,0.05) scale(1.0000,1.0000)"><rect x="3.6" y="0" width="8.7" height="7.9" rx="0.5" fill="#c6c7c1"/><rect x="4.2" y="0.5" width="6.8" height="5.9" fill="#6a8aec"/><path d="M4.2 0.5 H7.2 L8 6.4 H4.2z" fill="#1b31c8"/><path d="M8.6 0.5 H11 V4 z" fill="#a9c1f6"/><path d="M0 9.6 Q0.2 6.6 2.6 6.6 Q5 6.6 5.2 9.6 Q2.6 10.6 0 9.6Z" fill="#4a9a3c"/><circle cx="2.8" cy="4.4" r="1.9" fill="#cdb96e"/><path d="M0.9 4.2 A1.9 1.9 0 0 1 4.7 4.2 L3.8 3.6 L1.8 3.6Z" fill="#9c8440"/><path d="M4.4 10.9 Q4.6 7.8 7.4 7.8 Q10.2 7.8 10.4 10.9 Q7.4 11.9 4.4 10.9Z" fill="#86b6e6"/><circle cx="7.3" cy="5.8" r="2" fill="#5c3416"/><circle cx="7.4" cy="6.5" r="1.1" fill="#c8915f"/></g></svg>
<span class="t" style="left:172.00px;top:156.8px;transform:scaleX(0.9568)">Distributed COM Users</span>
<span class="t" style="left:272.40px;top:156.8px;transform:scaleX(0.9826)">Members are allowed to launch, a...</span>
<svg style="left:158px;top:172px" width="14" height="13" viewBox="0 0 14 13"><g transform="translate(0.10,0.24) scale(1.0000,1.0000)"><rect x="3.6" y="0" width="8.7" height="7.9" rx="0.5" fill="#c6c7c1"/><rect x="4.2" y="0.5" width="6.8" height="5.9" fill="#6a8aec"/><path d="M4.2 0.5 H7.2 L8 6.4 H4.2z" fill="#1b31c8"/><path d="M8.6 0.5 H11 V4 z" fill="#a9c1f6"/><path d="M0 9.6 Q0.2 6.6 2.6 6.6 Q5 6.6 5.2 9.6 Q2.6 10.6 0 9.6Z" fill="#4a9a3c"/><circle cx="2.8" cy="4.4" r="1.9" fill="#cdb96e"/><path d="M0.9 4.2 A1.9 1.9 0 0 1 4.7 4.2 L3.8 3.6 L1.8 3.6Z" fill="#9c8440"/><path d="M4.4 10.9 Q4.6 7.8 7.4 7.8 Q10.2 7.8 10.4 10.9 Q7.4 11.9 4.4 10.9Z" fill="#86b6e6"/><circle cx="7.3" cy="5.8" r="2" fill="#5c3416"/><circle cx="7.4" cy="6.5" r="1.1" fill="#c8915f"/></g></svg>
<span class="t" style="left:172.00px;top:171.0px;transform:scaleX(0.9252)">Event Log Readers</span>
<span class="t" style="left:272.40px;top:171.0px;transform:scaleX(0.9917)">Members of this group can read e...</span>
<svg style="left:158px;top:186px" width="14" height="13" viewBox="0 0 14 13"><g transform="translate(0.10,0.43) scale(1.0000,1.0000)"><rect x="3.6" y="0" width="8.7" height="7.9" rx="0.5" fill="#c6c7c1"/><rect x="4.2" y="0.5" width="6.8" height="5.9" fill="#6a8aec"/><path d="M4.2 0.5 H7.2 L8 6.4 H4.2z" fill="#1b31c8"/><path d="M8.6 0.5 H11 V4 z" fill="#a9c1f6"/><path d="M0 9.6 Q0.2 6.6 2.6 6.6 Q5 6.6 5.2 9.6 Q2.6 10.6 0 9.6Z" fill="#4a9a3c"/><circle cx="2.8" cy="4.4" r="1.9" fill="#cdb96e"/><path d="M0.9 4.2 A1.9 1.9 0 0 1 4.7 4.2 L3.8 3.6 L1.8 3.6Z" fill="#9c8440"/><path d="M4.4 10.9 Q4.6 7.8 7.4 7.8 Q10.2 7.8 10.4 10.9 Q7.4 11.9 4.4 10.9Z" fill="#86b6e6"/><circle cx="7.3" cy="5.8" r="2" fill="#5c3416"/><circle cx="7.4" cy="6.5" r="1.1" fill="#c8915f"/></g></svg>
<span class="t" style="left:172.00px;top:185.2px;transform:scaleX(0.8962)">Guests</span>
<span class="t" style="left:272.40px;top:185.2px;transform:scaleX(0.9421)">Guests have the same access as m...</span>
<svg style="left:158px;top:200px" width="14" height="14" viewBox="0 0 14 14"><g transform="translate(0.10,0.62) scale(1.0000,1.0000)"><rect x="3.6" y="0" width="8.7" height="7.9" rx="0.5" fill="#c6c7c1"/><rect x="4.2" y="0.5" width="6.8" height="5.9" fill="#6a8aec"/><path d="M4.2 0.5 H7.2 L8 6.4 H4.2z" fill="#1b31c8"/><path d="M8.6 0.5 H11 V4 z" fill="#a9c1f6"/><path d="M0 9.6 Q0.2 6.6 2.6 6.6 Q5 6.6 5.2 9.6 Q2.6 10.6 0 9.6Z" fill="#4a9a3c"/><circle cx="2.8" cy="4.4" r="1.9" fill="#cdb96e"/><path d="M0.9 4.2 A1.9 1.9 0 0 1 4.7 4.2 L3.8 3.6 L1.8 3.6Z" fill="#9c8440"/><path d="M4.4 10.9 Q4.6 7.8 7.4 7.8 Q10.2 7.8 10.4 10.9 Q7.4 11.9 4.4 10.9Z" fill="#86b6e6"/><circle cx="7.3" cy="5.8" r="2" fill="#5c3416"/><circle cx="7.4" cy="6.5" r="1.1" fill="#c8915f"/></g></svg>
<span class="t" style="left:172.00px;top:199.4px;transform:scaleX(0.9997)">Hyper-V Administrators</span>
<span class="t" style="left:272.40px;top:199.4px;transform:scaleX(1.0039)">Members of this group have com...</span>
<svg style="left:158px;top:214px" width="14" height="14" viewBox="0 0 14 14"><g transform="translate(0.10,0.81) scale(1.0000,1.0000)"><rect x="3.6" y="0" width="8.7" height="7.9" rx="0.5" fill="#c6c7c1"/><rect x="4.2" y="0.5" width="6.8" height="5.9" fill="#6a8aec"/><path d="M4.2 0.5 H7.2 L8 6.4 H4.2z" fill="#1b31c8"/><path d="M8.6 0.5 H11 V4 z" fill="#a9c1f6"/><path d="M0 9.6 Q0.2 6.6 2.6 6.6 Q5 6.6 5.2 9.6 Q2.6 10.6 0 9.6Z" fill="#4a9a3c"/><circle cx="2.8" cy="4.4" r="1.9" fill="#cdb96e"/><path d="M0.9 4.2 A1.9 1.9 0 0 1 4.7 4.2 L3.8 3.6 L1.8 3.6Z" fill="#9c8440"/><path d="M4.4 10.9 Q4.6 7.8 7.4 7.8 Q10.2 7.8 10.4 10.9 Q7.4 11.9 4.4 10.9Z" fill="#86b6e6"/><circle cx="7.3" cy="5.8" r="2" fill="#5c3416"/><circle cx="7.4" cy="6.5" r="1.1" fill="#c8915f"/></g></svg>
<span class="t" style="left:172.00px;top:213.6px;transform:scaleX(0.8044)">IIS_IUSRS</span>
<span class="t" style="left:272.40px;top:213.6px;transform:scaleX(1.0095)">Built-in group used by Internet Inf...</span>
<svg style="left:158px;top:229px" width="14" height="13" viewBox="0 0 14 13"><g transform="translate(0.10,0.00) scale(1.0000,1.0000)"><rect x="3.6" y="0" width="8.7" height="7.9" rx="0.5" fill="#c6c7c1"/><rect x="4.2" y="0.5" width="6.8" height="5.9" fill="#6a8aec"/><path d="M4.2 0.5 H7.2 L8 6.4 H4.2z" fill="#1b31c8"/><path d="M8.6 0.5 H11 V4 z" fill="#a9c1f6"/><path d="M0 9.6 Q0.2 6.6 2.6 6.6 Q5 6.6 5.2 9.6 Q2.6 10.6 0 9.6Z" fill="#4a9a3c"/><circle cx="2.8" cy="4.4" r="1.9" fill="#cdb96e"/><path d="M0.9 4.2 A1.9 1.9 0 0 1 4.7 4.2 L3.8 3.6 L1.8 3.6Z" fill="#9c8440"/><path d="M4.4 10.9 Q4.6 7.8 7.4 7.8 Q10.2 7.8 10.4 10.9 Q7.4 11.9 4.4 10.9Z" fill="#86b6e6"/><circle cx="7.3" cy="5.8" r="2" fill="#5c3416"/><circle cx="7.4" cy="6.5" r="1.1" fill="#c8915f"/></g></svg>
<span class="t" style="left:172.00px;top:227.8px;transform:scaleX(1.0161)">Network Configuratio...</span>
<span class="t" style="left:272.40px;top:227.8px;transform:scaleX(0.9883)">Members in this group can have s...</span>
<svg style="left:158px;top:243px" width="14" height="13" viewBox="0 0 14 13"><g transform="translate(0.10,0.19) scale(1.0000,1.0000)"><rect x="3.6" y="0" width="8.7" height="7.9" rx="0.5" fill="#c6c7c1"/><rect x="4.2" y="0.5" width="6.8" height="5.9" fill="#6a8aec"/><path d="M4.2 0.5 H7.2 L8 6.4 H4.2z" fill="#1b31c8"/><path d="M8.6 0.5 H11 V4 z" fill="#a9c1f6"/><path d="M0 9.6 Q0.2 6.6 2.6 6.6 Q5 6.6 5.2 9.6 Q2.6 10.6 0 9.6Z" fill="#4a9a3c"/><circle cx="2.8" cy="4.4" r="1.9" fill="#cdb96e"/><path d="M0.9 4.2 A1.9 1.9 0 0 1 4.7 4.2 L3.8 3.6 L1.8 3.6Z" fill="#9c8440"/><path d="M4.4 10.9 Q4.6 7.8 7.4 7.8 Q10.2 7.8 10.4 10.9 Q7.4 11.9 4.4 10.9Z" fill="#86b6e6"/><circle cx="7.3" cy="5.8" r="2" fill="#5c3416"/><circle cx="7.4" cy="6.5" r="1.1" fill="#c8915f"/></g></svg>
<span class="t" style="left:172.00px;top:242.0px;transform:scaleX(0.9525)">Performance Log Users</span>
<span class="t" style="left:272.40px;top:242.0px;transform:scaleX(0.9960)">Members of this group may sche...</span>
<svg style="left:158px;top:257px" width="14" height="13" viewBox="0 0 14 13"><g transform="translate(0.10,0.38) scale(1.0000,1.0000)"><rect x="3.6" y="0" width="8.7" height="7.9" rx="0.5" fill="#c6c7c1"/><rect x="4.2" y="0.5" width="6.8" height="5.9" fill="#6a8aec"/><path d="M4.2 0.5 H7.2 L8 6.4 H4.2z" fill="#1b31c8"/><path d="M8.6 0.5 H11 V4 z" fill="#a9c1f6"/><path d="M0 9.6 Q0.2 6.6 2.6 6.6 Q5 6.6 5.2 9.6 Q2.6 10.6 0 9.6Z" fill="#4a9a3c"/><circle cx="2.8" cy="4.4" r="1.9" fill="#cdb96e"/><path d="M0.9 4.2 A1.9 1.9 0 0 1 4.7 4.2 L3.8 3.6 L1.8 3.6Z" fill="#9c8440"/><path d="M4.4 10.9 Q4.6 7.8 7.4 7.8 Q10.2 7.8 10.4 10.9 Q7.4 11.9 4.4 10.9Z" fill="#86b6e6"/><circle cx="7.3" cy="5.8" r="2" fill="#5c3416"/><circle cx="7.4" cy="6.5" r="1.1" fill="#c8915f"/></g></svg>
<span class="t" style="left:172.00px;top:256.2px;transform:scaleX(1.0050)">Performance Monitor ...</span>
<span class="t" style="left:272.40px;top:256.2px;transform:scaleX(0.9838)">Members of this group can acces...</span>
<svg style="left:158px;top:271px" width="14" height="13" viewBox="0 0 14 13"><g transform="translate(0.10,0.57) scale(1.0000,1.0000)"><rect x="3.6" y="0" width="8.7" height="7.9" rx="0.5" fill="#c6c7c1"/><rect x="4.2" y="0.5" width="6.8" height="5.9" fill="#6a8aec"/><path d="M4.2 0.5 H7.2 L8 6.4 H4.2z" fill="#1b31c8"/><path d="M8.6 0.5 H11 V4 z" fill="#a9c1f6"/><path d="M0 9.6 Q0.2 6.6 2.6 6.6 Q5 6.6 5.2 9.6 Q2.6 10.6 0 9.6Z" fill="#4a9a3c"/><circle cx="2.8" cy="4.4" r="1.9" fill="#cdb96e"/><path d="M0.9 4.2 A1.9 1.9 0 0 1 4.7 4.2 L3.8 3.6 L1.8 3.6Z" fill="#9c8440"/><path d="M4.4 10.9 Q4.6 7.8 7.4 7.8 Q10.2 7.8 10.4 10.9 Q7.4 11.9 4.4 10.9Z" fill="#86b6e6"/><circle cx="7.3" cy="5.8" r="2" fill="#5c3416"/><circle cx="7.4" cy="6.5" r="1.1" fill="#c8915f"/></g></svg>
<span class="t" style="left:172.00px;top:270.4px;transform:scaleX(0.9132)">Power Users</span>
<span class="t" style="left:272.40px;top:270.4px;transform:scaleX(0.9677)">Power Users are included for back...</span>
<svg style="left:158px;top:285px" width="14" height="14" viewBox="0 0 14 14"><g transform="translate(0.10,0.76) scale(1.0000,1.0000)"><rect x="3.6" y="0" width="8.7" height="7.9" rx="0.5" fill="#c6c7c1"/><rect x="4.2" y="0.5" width="6.8" height="5.9" fill="#6a8aec"/><path d="M4.2 0.5 H7.2 L8 6.4 H4.2z" fill="#1b31c8"/><path d="M8.6 0.5 H11 V4 z" fill="#a9c1f6"/><path d="M0 9.6 Q0.2 6.6 2.6 6.6 Q5 6.6 5.2 9.6 Q2.6 10.6 0 9.6Z" fill="#4a9a3c"/><circle cx="2.8" cy="4.4" r="1.9" fill="#cdb96e"/><path d="M0.9 4.2 A1.9 1.9 0 0 1 4.7 4.2 L3.8 3.6 L1.8 3.6Z" fill="#9c8440"/><path d="M4.4 10.9 Q4.6 7.8 7.4 7.8 Q10.2 7.8 10.4 10.9 Q7.4 11.9 4.4 10.9Z" fill="#86b6e6"/><circle cx="7.3" cy="5.8" r="2" fill="#5c3416"/><circle cx="7.4" cy="6.5" r="1.1" fill="#c8915f"/></g></svg>
<span class="t" style="left:172.00px;top:284.6px;transform:scaleX(0.9671)">Print Operators</span>
<span class="t" style="left:272.40px;top:284.6px;transform:scaleX(1.0025)">Members can administer domain ...</span>
<svg style="left:158px;top:299px" width="14" height="14" viewBox="0 0 14 14"><g transform="translate(0.10,0.95) scale(1.0000,1.0000)"><rect x="3.6" y="0" width="8.7" height="7.9" rx="0.5" fill="#c6c7c1"/><rect x="4.2" y="0.5" width="6.8" height="5.9" fill="#6a8aec"/><path d="M4.2 0.5 H7.2 L8 6.4 H4.2z" fill="#1b31c8"/><path d="M8.6 0.5 H11 V4 z" fill="#a9c1f6"/><path d="M0 9.6 Q0.2 6.6 2.6 6.6 Q5 6.6 5.2 9.6 Q2.6 10.6 0 9.6Z" fill="#4a9a3c"/><circle cx="2.8" cy="4.4" r="1.9" fill="#cdb96e"/><path d="M0.9 4.2 A1.9 1.9 0 0 1 4.7 4.2 L3.8 3.6 L1.8 3.6Z" fill="#9c8440"/><path d="M4.4 10.9 Q4.6 7.8 7.4 7.8 Q10.2 7.8 10.4 10.9 Q7.4 11.9 4.4 10.9Z" fill="#86b6e6"/><circle cx="7.3" cy="5.8" r="2" fill="#5c3416"/><circle cx="7.4" cy="6.5" r="1.1" fill="#c8915f"/></g></svg>
<span class="t" style="left:172.00px;top:298.8px;transform:scaleX(0.9172)">RDS Endpoint Servers</span>
<span class="t" style="left:272.40px;top:298.8px;transform:scaleX(0.9919)">Servers in this group run virtual m...</span>
<svg style="left:158px;top:314px" width="14" height="13" viewBox="0 0 14 13"><g transform="translate(0.10,0.14) scale(1.0000,1.0000)"><rect x="3.6" y="0" width="8.7" height="7.9" rx="0.5" fill="#c6c7c1"/><rect x="4.2" y="0.5" width="6.8" height="5.9" fill="#6a8aec"/><path d="M4.2 0.5 H7.2 L8 6.4 H4.2z" fill="#1b31c8"/><path d="M8.6 0.5 H11 V4 z" fill="#a9c1f6"/><path d="M0 9.6 Q0.2 6.6 2.6 6.6 Q5 6.6 5.2 9.6 Q2.6 10.6 0 9.6Z" fill="#4a9a3c"/><circle cx="2.8" cy="4.4" r="1.9" fill="#cdb96e"/><path d="M0.9 4.2 A1.9 1.9 0 0 1 4.7 4.2 L3.8 3.6 L1.8 3.6Z" fill="#9c8440"/><path d="M4.4 10.9 Q4.6 7.8 7.4 7.8 Q10.2 7.8 10.4 10.9 Q7.4 11.9 4.4 10.9Z" fill="#86b6e6"/><circle cx="7.3" cy="5.8" r="2" fill="#5c3416"/><circle cx="7.4" cy="6.5" r="1.1" fill="#c8915f"/></g></svg>
<span class="t" style="left:172.00px;top:312.9px;transform:scaleX(0.9454)">RDS Management Ser...</span>
<span class="t" style="left:272.40px;top:312.9px;transform:scaleX(0.9849)">Servers in this group can perform ...</span>
<svg style="left:158px;top:328px" width="14" height="13" viewBox="0 0 14 13"><g transform="translate(0.10,0.33) scale(1.0000,1.0000)"><rect x="3.6" y="0" width="8.7" height="7.9" rx="0.5" fill="#c6c7c1"/><rect x="4.2" y="0.5" width="6.8" height="5.9" fill="#6a8aec"/><path d="M4.2 0.5 H7.2 L8 6.4 H4.2z" fill="#1b31c8"/><path d="M8.6 0.5 H11 V4 z" fill="#a9c1f6"/><path d="M0 9.6 Q0.2 6.6 2.6 6.6 Q5 6.6 5.2 9.6 Q2.6 10.6 0 9.6Z" fill="#4a9a3c"/><circle cx="2.8" cy="4.4" r="1.9" fill="#cdb96e"/><path d="M0.9 4.2 A1.9 1.9 0 0 1 4.7 4.2 L3.8 3.6 L1.8 3.6Z" fill="#9c8440"/><path d="M4.4 10.9 Q4.6 7.8 7.4 7.8 Q10.2 7.8 10.4 10.9 Q7.4 11.9 4.4 10.9Z" fill="#86b6e6"/><circle cx="7.3" cy="5.8" r="2" fill="#5c3416"/><circle cx="7.4" cy="6.5" r="1.1" fill="#c8915f"/></g></svg>
<span class="t" style="left:172.00px;top:327.1px;transform:scaleX(0.9097)">RDS Remote Access S...</span>
<span class="t" style="left:272.40px;top:327.1px;transform:scaleX(0.9612)">Servers in this group enable users ...</span>
<svg style="left:158px;top:342px" width="14" height="13" viewBox="0 0 14 13"><g transform="translate(0.10,0.52) scale(1.0000,1.0000)"><rect x="3.6" y="0" width="8.7" height="7.9" rx="0.5" fill="#c6c7c1"/><rect x="4.2" y="0.5" width="6.8" height="5.9" fill="#6a8aec"/><path d="M4.2 0.5 H7.2 L8 6.4 H4.2z" fill="#1b31c8"/><path d="M8.6 0.5 H11 V4 z" fill="#a9c1f6"/><path d="M0 9.6 Q0.2 6.6 2.6 6.6 Q5 6.6 5.2 9.6 Q2.6 10.6 0 9.6Z" fill="#4a9a3c"/><circle cx="2.8" cy="4.4" r="1.9" fill="#cdb96e"/><path d="M0.9 4.2 A1.9 1.9 0 0 1 4.7 4.2 L3.8 3.6 L1.8 3.6Z" fill="#9c8440"/><path d="M4.4 10.9 Q4.6 7.8 7.4 7.8 Q10.2 7.8 10.4 10.9 Q7.4 11.9 4.4 10.9Z" fill="#86b6e6"/><circle cx="7.3" cy="5.8" r="2" fill="#5c3416"/><circle cx="7.4" cy="6.5" r="1.1" fill="#c8915f"/></g></svg>
<span class="t" style="left:172.00px;top:341.3px;transform:scaleX(0.9409)">Remote Desktop Users</span>
<span class="t" style="left:272.40px;top:341.3px;transform:scaleX(0.9873)">Members in this group are grante...</span>
<svg style="left:158px;top:356px" width="14" height="14" viewBox="0 0 14 14"><g transform="translate(0.10,0.71) scale(1.0000,1.0000)"><rect x="3.6" y="0" width="8.7" height="7.9" rx="0.5" fill="#c6c7c1"/><rect x="4.2" y="0.5" width="6.8" height="5.9" fill="#6a8aec"/><path d="M4.2 0.5 H7.2 L8 6.4 H4.2z" fill="#1b31c8"/><path d="M8.6 0.5 H11 V4 z" fill="#a9c1f6"/><path d="M0 9.6 Q0.2 6.6 2.6 6.6 Q5 6.6 5.2 9.6 Q2.6 10.6 0 9.6Z" fill="#4a9a3c"/><circle cx="2.8" cy="4.4" r="1.9" fill="#cdb96e"/><path d="M0.9 4.2 A1.9 1.9 0 0 1 4.7 4.2 L3.8 3.6 L1.8 3.6Z" fill="#9c8440"/><path d="M4.4 10.9 Q4.6 7.8 7.4 7.8 Q10.2 7.8 10.4 10.9 Q7.4 11.9 4.4 10.9Z" fill="#86b6e6"/><circle cx="7.3" cy="5.8" r="2" fill="#5c3416"/><circle cx="7.4" cy="6.5" r="1.1" fill="#c8915f"/></g></svg>
<span class="t" style="left:172.00px;top:355.5px;transform:scaleX(0.9942)">Remote Management...</span>
<span class="t" style="left:272.40px;top:355.5px;transform:scaleX(0.9838)">Members of this group can acces...</span>
<svg style="left:158px;top:370px" width="14" height="14" viewBox="0 0 14 14"><g transform="translate(0.10,0.90) scale(1.0000,1.0000)"><rect x="3.6" y="0" width="8.7" height="7.9" rx="0.5" fill="#c6c7c1"/><rect x="4.2" y="0.5" width="6.8" height="5.9" fill="#6a8aec"/><path d="M4.2 0.5 H7.2 L8 6.4 H4.2z" fill="#1b31c8"/><path d="M8.6 0.5 H11 V4 z" fill="#a9c1f6"/><path d="M0 9.6 Q0.2 6.6 2.6 6.6 Q5 6.6 5.2 9.6 Q2.6 10.6 0 9.6Z" fill="#4a9a3c"/><circle cx="2.8" cy="4.4" r="1.9" fill="#cdb96e"/><path d="M0.9 4.2 A1.9 1.9 0 0 1 4.7 4.2 L3.8 3.6 L1.8 3.6Z" fill="#9c8440"/><path d="M4.4 10.9 Q4.6 7.8 7.4 7.8 Q10.2 7.8 10.4 10.9 Q7.4 11.9 4.4 10.9Z" fill="#86b6e6"/><circle cx="7.3" cy="5.8" r="2" fill="#5c3416"/><circle cx="7.4" cy="6.5" r="1.1" fill="#c8915f"/></g></svg>
<span class="t" style="left:172.00px;top:369.7px;transform:scaleX(0.9686)">Replicator</span>
<span class="t" style="left:272.40px;top:369.7px;transform:scaleX(1.0017)">Supports file replication in a dom...</span>
<svg style="left:158px;top:385px" width="14" height="13" viewBox="0 0 14 13"><g transform="translate(0.10,0.09) scale(1.0000,1.0000)"><rect x="3.6" y="0" width="8.7" height="7.9" rx="0.5" fill="#c6c7c1"/><rect x="4.2" y="0.5" width="6.8" height="5.9" fill="#6a8aec"/><path d="M4.2 0.5 H7.2 L8 6.4 H4.2z" fill="#1b31c8"/><path d="M8.6 0.5 H11 V4 z" fill="#a9c1f6"/><path d="M0 9.6 Q0.2 6.6 2.6 6.6 Q5 6.6 5.2 9.6 Q2.6 10.6 0 9.6Z" fill="#4a9a3c"/><circle cx="2.8" cy="4.4" r="1.9" fill="#cdb96e"/><path d="M0.9 4.2 A1.9 1.9 0 0 1 4.7 4.2 L3.8 3.6 L1.8 3.6Z" fill="#9c8440"/><path d="M4.4 10.9 Q4.6 7.8 7.4 7.8 Q10.2 7.8 10.4 10.9 Q7.4 11.9 4.4 10.9Z" fill="#86b6e6"/><circle cx="7.3" cy="5.8" r="2" fill="#5c3416"/><circle cx="7.4" cy="6.5" r="1.1" fill="#c8915f"/></g></svg>
<span class="t" style="left:172.00px;top:383.9px;transform:scaleX(0.8749)">Users</span>
<span class="t" style="left:272.40px;top:383.9px;transform:scaleX(0.9814)">Users are prevented from making ...</span>
<svg style="left:158px;top:399px" width="14" height="13" viewBox="0 0 14 13"><g transform="translate(0.10,0.28) scale(1.0000,1.0000)"><rect x="3.6" y="0" width="8.7" height="7.9" rx="0.5" fill="#c6c7c1"/><rect x="4.2" y="0.5" width="6.8" height="5.9" fill="#6a8aec"/><path d="M4.2 0.5 H7.2 L8 6.4 H4.2z" fill="#1b31c8"/><path d="M8.6 0.5 H11 V4 z" fill="#a9c1f6"/><path d="M0 9.6 Q0.2 6.6 2.6 6.6 Q5 6.6 5.2 9.6 Q2.6 10.6 0 9.6Z" fill="#4a9a3c"/><circle cx="2.8" cy="4.4" r="1.9" fill="#cdb96e"/><path d="M0.9 4.2 A1.9 1.9 0 0 1 4.7 4.2 L3.8 3.6 L1.8 3.6Z" fill="#9c8440"/><path d="M4.4 10.9 Q4.6 7.8 7.4 7.8 Q10.2 7.8 10.4 10.9 Q7.4 11.9 4.4 10.9Z" fill="#86b6e6"/><circle cx="7.3" cy="5.8" r="2" fill="#5c3416"/><circle cx="7.4" cy="6.5" r="1.1" fill="#c8915f"/></g></svg>
<span class="t" style="left:172.00px;top:398.1px;transform:scaleX(0.9694)">HelpLibraryUpdaters</span>
<svg style="left:158px;top:413px" width="14" height="13" viewBox="0 0 14 13"><g transform="translate(0.10,0.47) scale(1.0000,1.0000)"><rect x="3.6" y="0" width="8.7" height="7.9" rx="0.5" fill="#c6c7c1"/><rect x="4.2" y="0.5" width="6.8" height="5.9" fill="#6a8aec"/><path d="M4.2 0.5 H7.2 L8 6.4 H4.2z" fill="#1b31c8"/><path d="M8.6 0.5 H11 V4 z" fill="#a9c1f6"/><path d="M0 9.6 Q0.2 6.6 2.6 6.6 Q5 6.6 5.2 9.6 Q2.6 10.6 0 9.6Z" fill="#4a9a3c"/><circle cx="2.8" cy="4.4" r="1.9" fill="#cdb96e"/><path d="M0.9 4.2 A1.9 1.9 0 0 1 4.7 4.2 L3.8 3.6 L1.8 3.6Z" fill="#9c8440"/><path d="M4.4 10.9 Q4.6 7.8 7.4 7.8 Q10.2 7.8 10.4 10.9 Q7.4 11.9 4.4 10.9Z" fill="#86b6e6"/><circle cx="7.3" cy="5.8" r="2" fill="#5c3416"/><circle cx="7.4" cy="6.5" r="1.1" fill="#c8915f"/></g></svg>
<span class="t" style="left:172.00px;top:412.3px;transform:scaleX(0.9029)">SQLServer2005SQLBro...</span>
<span class="t" style="left:272.40px;top:412.3px;transform:scaleX(0.9917)">Members in the group have the re...</span>
<svg style="left:158px;top:427px" width="14" height="14" viewBox="0 0 14 14"><g transform="translate(0.10,0.66) scale(1.0000,1.0000)"><rect x="3.6" y="0" width="8.7" height="7.9" rx="0.5" fill="#c6c7c1"/><rect x="4.2" y="0.5" width="6.8" height="5.9" fill="#6a8aec"/><path d="M4.2 0.5 H7.2 L8 6.4 H4.2z" fill="#1b31c8"/><path d="M8.6 0.5 H11 V4 z" fill="#a9c1f6"/><path d="M0 9.6 Q0.2 6.6 2.6 6.6 Q5 6.6 5.2 9.6 Q2.6 10.6 0 9.6Z" fill="#4a9a3c"/><circle cx="2.8" cy="4.4" r="1.9" fill="#cdb96e"/><path d="M0.9 4.2 A1.9 1.9 0 0 1 4.7 4.2 L3.8 3.6 L1.8 3.6Z" fill="#9c8440"/><path d="M4.4 10.9 Q4.6 7.8 7.4 7.8 Q10.2 7.8 10.4 10.9 Q7.4 11.9 4.4 10.9Z" fill="#86b6e6"/><circle cx="7.3" cy="5.8" r="2" fill="#5c3416"/><circle cx="7.4" cy="6.5" r="1.1" fill="#c8915f"/></g></svg>
<span class="t" style="left:172.00px;top:426.5px;transform:scaleX(0.9731)">WinRMRemoteWMIU...</span>
<span class="t" style="left:272.40px;top:426.5px;transform:scaleX(0.9838)">Members of this group can acces...</span>
<span class="t tt" style="left:318.80px;top:11.2px;font-size:11.6px;transform:scaleX(0.9594)">Computer Management</span>
<span class="t" style="left:16.90px;top:32.4px;transform:scaleX(0.9451)">File</span>
<span class="t" style="left:42.80px;top:32.4px;transform:scaleX(1.0237)">Action</span>
<span class="t" style="left:81.00px;top:32.4px;transform:scaleX(0.9221)">View</span>
<span class="t" style="left:111.90px;top:32.4px;transform:scaleX(0.9890)">Help</span>
<span class="t" style="left:160.30px;top:71.9px;transform:scaleX(0.9895)">Name</span>
<span class="t" style="left:272.30px;top:71.9px;transform:scaleX(0.9886)">Description</span>
</body>
</html>
